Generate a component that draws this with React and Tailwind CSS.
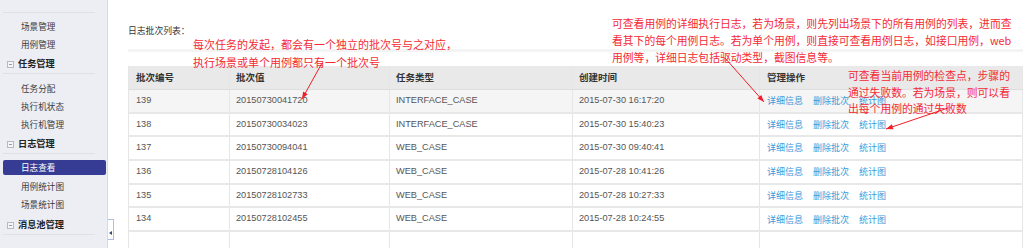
import React from "react";

const rows = [
  ["139", "20150730041720", "INTERFACE_CASE", "2015-07-30 16:17:20"],
  ["138", "20150730034023", "INTERFACE_CASE", "2015-07-30 15:40:23"],
  ["137", "20150730094041", "WEB_CASE", "2015-07-30 09:40:41"],
  ["136", "20150728104126", "WEB_CASE", "2015-07-28 10:41:26"],
  ["135", "20150728102733", "WEB_CASE", "2015-07-28 10:27:33"],
  ["134", "20150728102455", "WEB_CASE", "2015-07-28 10:24:55"],
];

function Item({ children }) {
  return (
    <div className="h-[18px] leading-[18px] pl-[21px] text-[8.6px] text-[#3a3a3a]">{children}</div>
  );
}

function Header({ children }) {
  return (
    <>
      <div className="mt-[2px] h-[18px] flex items-center pl-[7px] gap-[4px]">
        <span className="w-[7px] h-[7px] border border-[#b3b9c8] bg-[#f4f5f8] flex items-center justify-center">
          <span className="w-[3px] h-px bg-[#959cae]" />
        </span>
        <span className="text-[9.2px] font-bold text-[#222]">{children}</span>
      </div>
      <div className="ml-[3px] mr-[12px] h-px bg-[#dde0e8]" />
    </>
  );
}

function arrowHead(ax, ay, tx, ty) {
  const dx = tx - ax, dy = ty - ay;
  const len = Math.hypot(dx, dy);
  const ux = dx / len, uy = dy / len;
  const L = 7, W = 2.6;
  const bx = tx - ux * L, by = ty - uy * L;
  return `${tx},${ty} ${bx - uy * W},${by + ux * W} ${bx + uy * W},${by - ux * W}`;
}

const arrows = [
  [322, 63, 302, 99],
  [725, 58, 764, 102],
  [948, 108, 886, 129],
];

export default function App() {
  const cell = "h-full flex items-center pl-[6px] border-r border-[#e6e6e6]";
  return (
    <div className="relative w-[1027px] h-[248px] overflow-hidden bg-white flex font-['Liberation_Sans','Noto_Sans_CJK_SC',sans-serif]">
      {/* Sidebar */}
      <aside className="w-[108px] h-full shrink-0 bg-[#eceef4] border-r border-[#d6dae4] flex flex-col pt-[12px] font-['Noto_Sans_CJK_SC',sans-serif]">
        <div className="ml-[3px] mr-[12px] h-px bg-[#dde0e8]" />
        <div className="h-[4px]" />
        <Item>场景管理</Item>
        <Item>用例管理</Item>
        <Header>任务管理</Header>
        <div className="h-[5px]" />
        <Item>任务分配</Item>
        <Item>执行机状态</Item>
        <Item>执行机管理</Item>
        <Header>日志管理</Header>
        <div className="h-[6px]" />
        <div className="ml-[3px] mr-[1px] h-[15px] leading-[15px] pl-[18px] rounded-[2px] bg-[#363c94] text-white text-[8.6px]">
          日志查看
        </div>
        <div className="h-[2px]" />
        <Item>用例统计图</Item>
        <Item>场景统计图</Item>
        <div className="h-[1px]" />
        <Header>消息池管理</Header>
      </aside>

      {/* Toggle */}
      <div className="w-[7px] shrink-0 pt-[219px]">
        <div className="h-[21px] w-[6px] border-y border-r border-[#aabfe2] bg-white flex items-center pt-[6px]">
          <span className="ml-[1px] w-0 h-0 border-y-[2px] border-y-transparent border-r-[3px] border-r-[#334a7a]" />
        </div>
      </div>

      {/* Main */}
      <main className="flex-1 pl-[13px] pr-[5px] pt-[24px]">
        <div className="h-[14px] leading-[14px] text-[8.8px] text-[#333] font-['Noto_Sans_CJK_SC',sans-serif]">
          日志批次列表：
        </div>
        <div className="mt-[11px] h-[3px] bg-[#f4f4f4]" />
        <div className="mt-[14px] border-l border-[#e6e6e6]">
          <div className="grid grid-cols-[101px_160px_183px_187px_263px] h-[24px] bg-[#e9e9e9] border-b border-[#dedede] text-[9.5px] font-bold text-[#333] font-['Noto_Sans_CJK_SC',sans-serif]">
            <div className={cell + " pl-[7px]"}>批次编号</div>
            <div className={cell}>批次值</div>
            <div className={cell}>任务类型</div>
            <div className={cell}>创建时间</div>
            <div className={cell + " pl-[7px]"}>管理操作</div>
          </div>
          {rows.map((r, i) => (
            <div
              key={r[0]}
              className={
                "grid grid-cols-[101px_160px_183px_187px_263px] h-[23.7px] border-b-2 border-[#e8e8e8] text-[9.2px] text-[#555] " +
                (i === 0 ? "bg-[#f5f5f5]" : "bg-white")
              }
            >
              <div className={cell + " pl-[7px]"}>{r[0]}</div>
              <div className={cell}>{r[1]}</div>
              <div className={cell}>{r[2]}</div>
              <div className={cell}>{r[3]}</div>
              <div className={cell + " pl-[7px] gap-[10px] text-[9px] text-[#3b9ad9] font-['Noto_Sans_CJK_SC',sans-serif]"}>
                <span>详细信息</span>
                <span>删除批次</span>
                <span>统计图</span>
              </div>
            </div>
          ))}
          <div className="grid grid-cols-[101px_160px_183px_187px_263px] h-[24px]">
            <div className={cell} />
            <div className={cell} />
            <div className={cell} />
            <div className={cell} />
            <div className={cell} />
          </div>
        </div>
      </main>

      {/* Annotations */}
      <div className="absolute left-[193px] top-[35px] text-[11px] leading-[18px] text-[#f42a35] font-['Noto_Sans_CJK_SC',sans-serif] whitespace-nowrap">
        <div>每次任务的发起，都会有一个独立的批次号与之对应，</div>
        <div>执行场景或单个用例都只有一个批次号</div>
      </div>
      <div className="absolute left-[612px] top-[15px] text-[10.8px] leading-[17px] text-[#f42a35] font-['Noto_Sans_CJK_SC',sans-serif] whitespace-nowrap">
        <div>可查看用例的详细执行日志，若为场景，则先列出场景下的所有用例的列表，进而查</div>
        <div>看其下的每个用例日志。若为单个用例，则直接可查看用例日志，如接口用例，web</div>
        <div>用例等，详细日志包括驱动类型，截图信息等。</div>
      </div>
      <div className="absolute left-[848px] top-[67px] text-[10.8px] leading-[16.5px] text-[#f42a35] font-['Noto_Sans_CJK_SC',sans-serif] whitespace-nowrap">
        <div>可查看当前用例的检查点，步骤的</div>
        <div>通过失败数。若为场景，则可以看</div>
        <div>出每个用例的通过失败数</div>
      </div>

      <svg className="absolute inset-0 pointer-events-none" width="1027" height="248">
        {arrows.map(([ax, ay, tx, ty], i) => (
          <g key={i}>
            <line x1={ax} y1={ay} x2={tx} y2={ty} stroke="#f01e28" strokeWidth="1" />
            <polygon points={arrowHead(ax, ay, tx, ty)} fill="#f01e28" />
          </g>
        ))}
      </svg>
    </div>
  );
}
